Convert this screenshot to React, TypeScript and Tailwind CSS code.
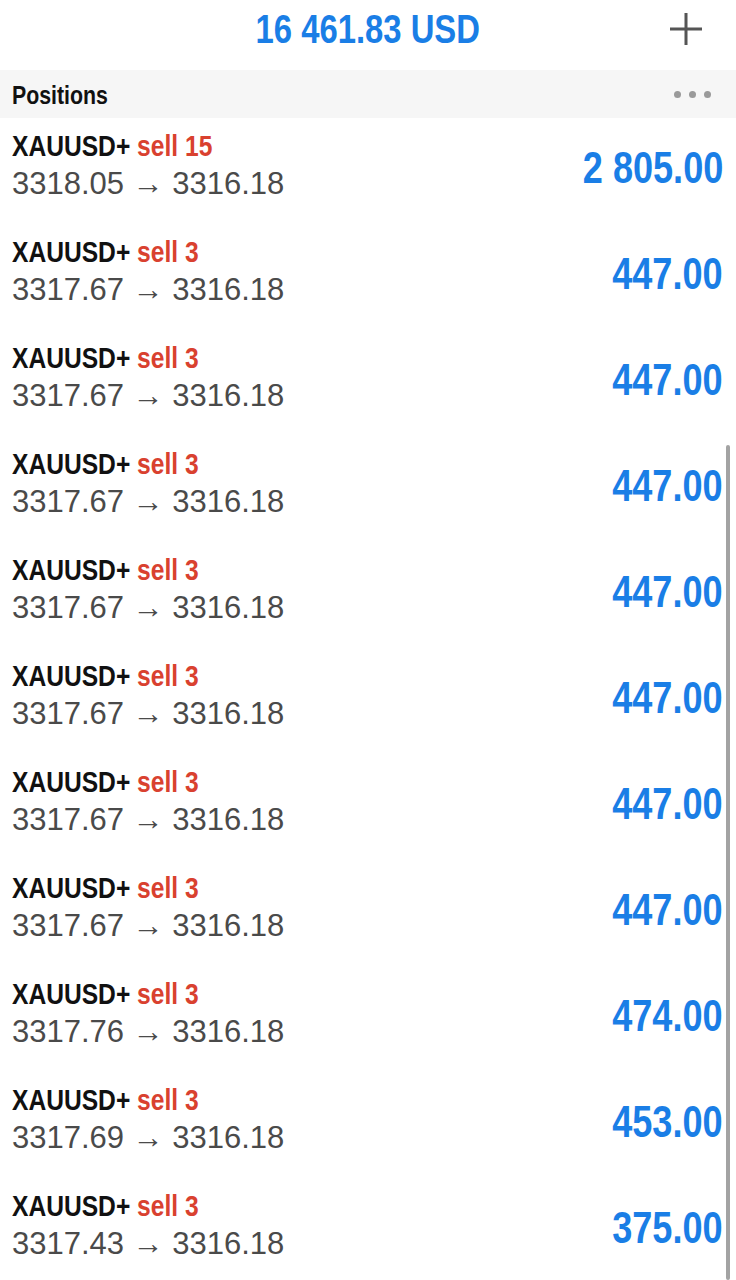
import React from 'react';

// no condensed face installed: squeeze Liberation Sans Bold like Arial Narrow
const bold = "font-['Liberation_Sans',Arial,sans-serif] font-bold inline-block scale-x-[0.82]";

// open positions, same quote for all
const positions = [
  { lots: 15, open: '3318.05', profit: '2 805.00' },
  { lots: 3, open: '3317.67', profit: '447.00' },
  { lots: 3, open: '3317.67', profit: '447.00' },
  { lots: 3, open: '3317.67', profit: '447.00' },
  { lots: 3, open: '3317.67', profit: '447.00' },
  { lots: 3, open: '3317.67', profit: '447.00' },
  { lots: 3, open: '3317.67', profit: '447.00' },
  { lots: 3, open: '3317.67', profit: '447.00' },
  { lots: 3, open: '3317.76', profit: '474.00' },
  { lots: 3, open: '3317.69', profit: '453.00' },
  { lots: 3, open: '3317.43', profit: '375.00' },
];

const PlusIcon = () => (
  <svg width="36" height="36" viewBox="0 0 36 36" className="block">
    <path d="M18 2v32M2 18h32" stroke="#555555" strokeWidth="3" fill="none" />
  </svg>
);

const App = () => {
  return (
    <div className="relative w-[736px] h-[1280px] overflow-hidden bg-white">
      <header className="relative h-[70px] flex justify-center pt-[9px]">
        <span className={`${bold} origin-center text-[40px] leading-[40px] text-[#1a7ee6] whitespace-nowrap`}>
          16 461.83 USD
        </span>
        <button className="absolute right-[32px] top-[11px]">
          <PlusIcon />
        </button>
      </header>

      <div className="h-[48px] bg-[#f6f6f6] flex items-center justify-between pl-3 pr-[25px]">
        <span className={`${bold} origin-left text-[26px] leading-[30px] text-[#111111] mt-[1px]`}>
          Positions
        </span>
        <div className="flex gap-[8px]">
          <span className="w-[7px] h-[7px] rounded-full bg-[#9a9a9a]" />
          <span className="w-[7px] h-[7px] rounded-full bg-[#9a9a9a]" />
          <span className="w-[7px] h-[7px] rounded-full bg-[#9a9a9a]" />
        </div>
      </div>

      <ul>
        {positions.map((p, i) => (
          <li key={i} className="h-[106px] flex justify-between pl-3 pr-[13px]">
            <div className="pt-[10px]">
              <div className="h-[36px]">
                <span className={`${bold} origin-left text-[30px] leading-[36px] whitespace-nowrap`}>
                  <span className="text-[#111111]">XAUUSD+</span>{' '}
                  <span className="text-[#d9412f]">sell {p.lots}</span>
                </span>
              </div>
              <div className="font-['Liberation_Sans',Arial,sans-serif] text-[31px] leading-[40px] text-[#4a4a4a] whitespace-nowrap">
                {p.open} → 3316.18
              </div>
            </div>
            <div className="mt-[28px]">
              <span className={`${bold} origin-right text-[44px] leading-[44px] text-[#1a7ee6] whitespace-nowrap`}>
                {p.profit}
              </span>
            </div>
          </li>
        ))}
      </ul>

      {/* scroll indicator */}
      <div className="absolute right-[6px] top-[445px] bottom-0 w-[4px] rounded-full bg-[#a3a3a3]" />
    </div>
  );
};

export default App;
